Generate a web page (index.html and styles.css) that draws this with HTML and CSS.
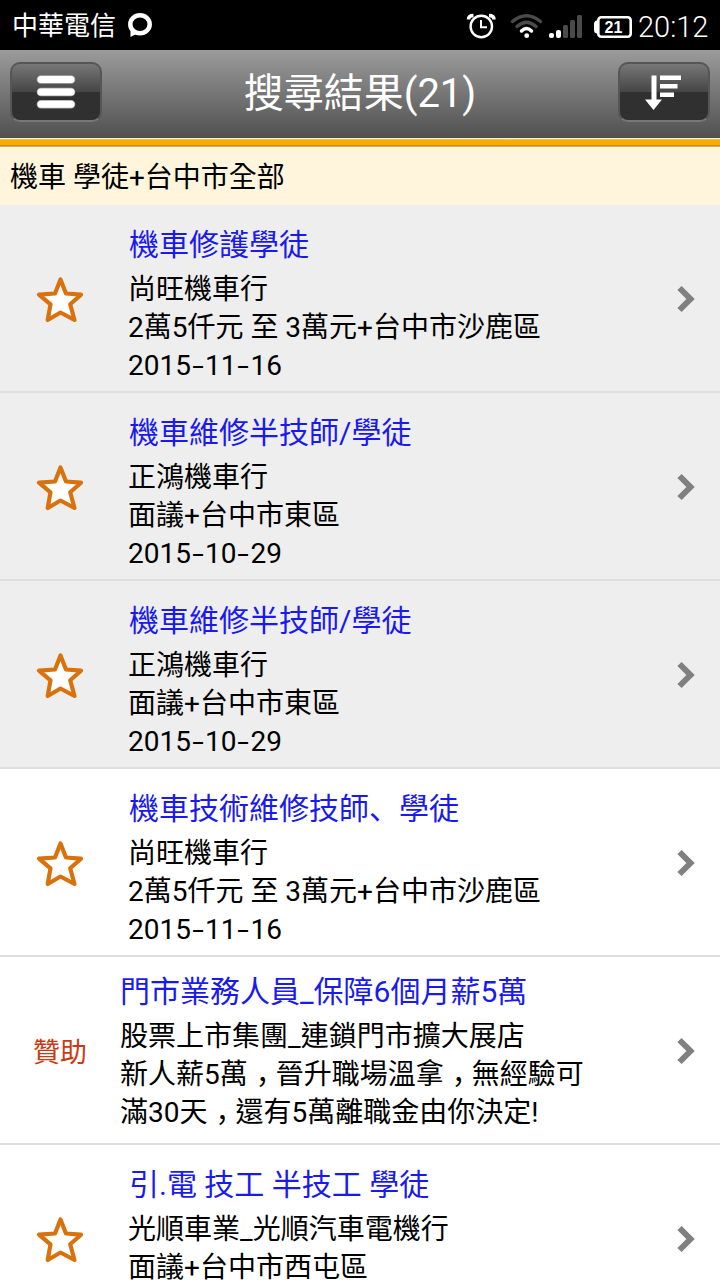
FILE: index.html
```
<!DOCTYPE html>
<html lang="zh-Hant">
<head>
  <meta charset="UTF-8">
  <meta name="viewport" content="width=device-width, initial-scale=1.0">
  <title>搜尋結果</title>
  <link rel="stylesheet" href="styles.css">
</head>
<body>

<svg class="symbols" width="0" height="0">
  <symbol id="star" viewBox="0 0 48 48">
    <path d="M24.500 3.500L30 17.500L45 18.700L34.200 28.300L38.500 44L24.500 36.500L11.700 44L14.500 28.300L3 18.700L19 17.500Z" fill="#fff" stroke="#d9720d" stroke-width="4.200" stroke-linejoin="round"/>
  </symbol>
  <symbol id="arrow" viewBox="0 0 20 28">
    <path d="M3.500 3L14.500 14L3.500 25" fill="none" stroke="#808080" stroke-width="6"/>
  </symbol>
</svg>

<div class="status-bar">
  <span class="carrier">中華電信</span>
  <svg class="chat-icon" width="26" height="26" viewBox="0 0 26 26">
    <path d="M3.500 16L3.500 25L11 21Z" fill="#fff"/>
    <ellipse cx="13" cy="12.200" rx="9.700" ry="9" fill="#000" stroke="#fff" stroke-width="4.500"/>
  </svg>
  <svg class="status-icons" width="170" height="30" viewBox="463 10 170 30">
    <!-- alarm -->
    <g fill="none" stroke="#fff">
      <circle cx="481.300" cy="26.500" r="10.700" stroke-width="2.400"/>
      <path d="M481 20V27.300H487" stroke-width="2"/>
      <path d="M468.500 19.500Q468.500 15.500 473.500 15.500M489 15.500Q494 15.500 494 19.500" stroke-width="3.500"/>
    </g>
    <!-- wifi -->
    <g fill="none" stroke-width="3.500" stroke-linecap="round">
      <path d="M512.500 21.500Q526.500 10 540.500 21.500" stroke="#4a4a4a"/>
      <path d="M517 26.500Q526.500 18 536 26.500" stroke="#4a4a4a"/>
      <path d="M521.500 31Q526.500 26 531.500 31" stroke="#fff"/>
    </g>
    <circle cx="526.700" cy="35.700" r="2.400" fill="#fff"/>
    <!-- signal -->
    <g fill="#fff">
      <rect x="549" y="33" width="5" height="5" rx="2"/>
      <rect x="556" y="30" width="5" height="8" rx="2"/>
    </g>
    <g fill="#4a4a4a">
      <rect x="563" y="25" width="5" height="13" rx="1.500"/>
      <rect x="570" y="20" width="5" height="18" rx="1.500"/>
      <rect x="577" y="15" width="5" height="23" rx="1.500"/>
    </g>
    <!-- battery -->
    <rect x="598.300" y="17.300" width="32.400" height="19.400" rx="3" fill="none" stroke="#fff" stroke-width="2.600"/>
    <path d="M599 20.500H596.500Q594 21 594 24V30Q594 33 596.500 33.500H599Z" fill="#fff"/>
    <text class="battery-text" x="613.500" y="33" text-anchor="middle">21</text>
  </svg>
  <span class="clock">20:12</span>
</div>

<div class="header">
  <button class="nav-button">
    <svg width="40" height="36" viewBox="0 0 40 36">
      <path d="M5 5.500H35M5 18H35M5 30.300H35" stroke="#aaa" stroke-width="8.600" stroke-linecap="round"/>
      <path d="M5 5.500H35M5 18H35M5 30.300H35" stroke="#fff" stroke-width="7" stroke-linecap="round"/>
    </svg>
  </button>
  <h1 class="title">搜尋結果(21)</h1>
  <button class="nav-button">
    <svg width="38" height="36" viewBox="0 0 38 36">
      <path d="M6.500 1.500H11.500V25.500H17L8.500 36L0 25.500H6.500Z" fill="#fff"/>
      <path d="M15 3.700H36M15 12.200H32.500M15 20.700H29" stroke="#fff" stroke-width="4.400"/>
    </svg>
  </button>
</div>

<div class="filter">機車 學徒+台中市全部</div>

<div class="list">
  <div class="row viewed">
    <div class="mark"><svg class="star"><use href="#star"/></svg></div>
    <div class="job">
      <div class="job-title">機車修護學徒</div>
      <div>尚旺機車行</div>
      <div>2萬5仟元 至 3萬元+台中市沙鹿區</div>
      <div>2015<span class="dash">-</span>11<span class="dash">-</span>16</div>
    </div>
    <svg class="arrow"><use href="#arrow"/></svg>
  </div>
  <div class="row viewed">
    <div class="mark"><svg class="star"><use href="#star"/></svg></div>
    <div class="job">
      <div class="job-title">機車維修半技師/學徒</div>
      <div>正鴻機車行</div>
      <div>面議+台中市東區</div>
      <div>2015<span class="dash">-</span>10<span class="dash">-</span>29</div>
    </div>
    <svg class="arrow"><use href="#arrow"/></svg>
  </div>
  <div class="row viewed">
    <div class="mark"><svg class="star"><use href="#star"/></svg></div>
    <div class="job">
      <div class="job-title">機車維修半技師/學徒</div>
      <div>正鴻機車行</div>
      <div>面議+台中市東區</div>
      <div>2015<span class="dash">-</span>10<span class="dash">-</span>29</div>
    </div>
    <svg class="arrow"><use href="#arrow"/></svg>
  </div>
  <div class="row">
    <div class="mark"><svg class="star"><use href="#star"/></svg></div>
    <div class="job">
      <div class="job-title">機車技術維修技師<span class="pause" lang="zh-Hans">、</span>學徒</div>
      <div>尚旺機車行</div>
      <div>2萬5仟元 至 3萬元+台中市沙鹿區</div>
      <div>2015<span class="dash">-</span>11<span class="dash">-</span>16</div>
    </div>
    <svg class="arrow"><use href="#arrow"/></svg>
  </div>
  <div class="row sponsor">
    <div class="mark">贊助</div>
    <div class="job">
      <div class="job-title">門市業務人員_保障6個月薪5萬</div>
      <div>股票上市集團_連鎖門市擴大展店</div>
      <div>新人薪5萬<span class="comma" lang="zh-Hans">，</span>晉升職場溫拿<span class="comma" lang="zh-Hans">，</span>無經驗可</div>
      <div>滿30天<span class="comma" lang="zh-Hans">，</span>還有5萬離職金由你決定!</div>
    </div>
    <svg class="arrow"><use href="#arrow"/></svg>
  </div>
  <div class="row">
    <div class="mark"><svg class="star"><use href="#star"/></svg></div>
    <div class="job">
      <div class="job-title">引.電 技工 半技工 學徒</div>
      <div>光順車業_光順汽車電機行</div>
      <div>面議+台中市西屯區</div>
    </div>
    <svg class="arrow"><use href="#arrow"/></svg>
  </div>
</div>

</body>
</html>
```
FILE: styles.css
```
* {
  box-sizing: border-box;
}

body {
  margin: 0;
  width: 720px;
  height: 1280px;
  overflow: hidden;
  background-color: #fff;
  color: #000;
  font-family: Roboto, "Noto Sans CJK TC", sans-serif;
  font-size: 28px;
}

.symbols {
  display: block;
}

.status-bar {
  display: flex;
  align-items: center;
  height: 50px;
  padding: 0 11px 0 12px;
  background-color: #000;
  color: #fff;
}

.carrier {
  padding-top: 2px;
  font-size: 26px;
  line-height: 48px;
}

.chat-icon {
  margin-left: 11px;
}

.status-icons {
  margin-left: auto;
}

.battery-text {
  font-family: "Liberation Sans", sans-serif;
  font-size: 16px;
  font-weight: bold;
  fill: #fff;
}

.clock {
  width: 71px;
  margin-left: 5px;
  padding-top: 4px;
  font-size: 29px;
  font-weight: 300;
  line-height: 46px;
}

.header {
  display: flex;
  justify-content: space-between;
  height: 88px;
  padding: 12px 10px 0;
  background: linear-gradient(#9b9b9b, #505050);
}

.nav-button {
  display: flex;
  justify-content: center;
  align-items: center;
  width: 92px;
  height: 60px;
  padding: 0;
  border: 2px solid #565656;
  border-bottom-color: #777;
  border-radius: 10px;
  background: linear-gradient(#777, #454545 50%, #303030 51%, #303030);
}

.title {
  margin: 0;
  padding-top: 2px;
  color: #fff;
  font-size: 40px;
  font-weight: normal;
  line-height: 60px;
}

.filter {
  height: 67px;
  padding: 2px 0 0 10px;
  border-top: 9px solid #f8ae00;
  border-image: linear-gradient(#fff5dc 0 1px, #f0c040 1px 2px, #f8ae00 2px 7px, #a97000 8px, #fff5dc 9px) 9 0 0;
  background-color: #fff5dc;
  line-height: 58px;
}

.row {
  display: flex;
  align-items: center;
  height: 188px;
  padding-right: 24px;
  border-bottom: 2px solid #dedede;
}

.row.viewed {
  background-color: #eee;
}

.mark {
  display: flex;
  justify-content: center;
  width: 120px;
  color: #cc3911;
}

.star {
  width: 48px;
  height: 48px;
  margin-top: 4px;
}

.job {
  flex: 1;
  align-self: flex-start;
  padding: 19px 0 0 8px;
  line-height: 38px;
  white-space: nowrap;
}

.job-title {
  margin-bottom: 5px;
  padding-left: 1px;
  color: #1a1aee;
  font-size: 30px;
  line-height: 42px;
}

.dash {
  display: inline-block;
  width: 14px;
  text-align: center;
  transform: scaleX(1.5);
}

.pause,
.comma {
  font-family: "Noto Sans CJK SC", sans-serif;
  line-height: 1;
}

/* half-width comma in the middle of a full-width cell */
.comma {
  padding: 0 6px 0 8px;
  font-feature-settings: "halt";
}

.sponsor .mark {
  font-size: 27px;
}

.sponsor .job {
  padding: 14px 0 0;
}

.sponsor .job-title {
  padding-left: 0;
}

.arrow {
  width: 20px;
  height: 28px;
  margin-top: 2px;
}
```
